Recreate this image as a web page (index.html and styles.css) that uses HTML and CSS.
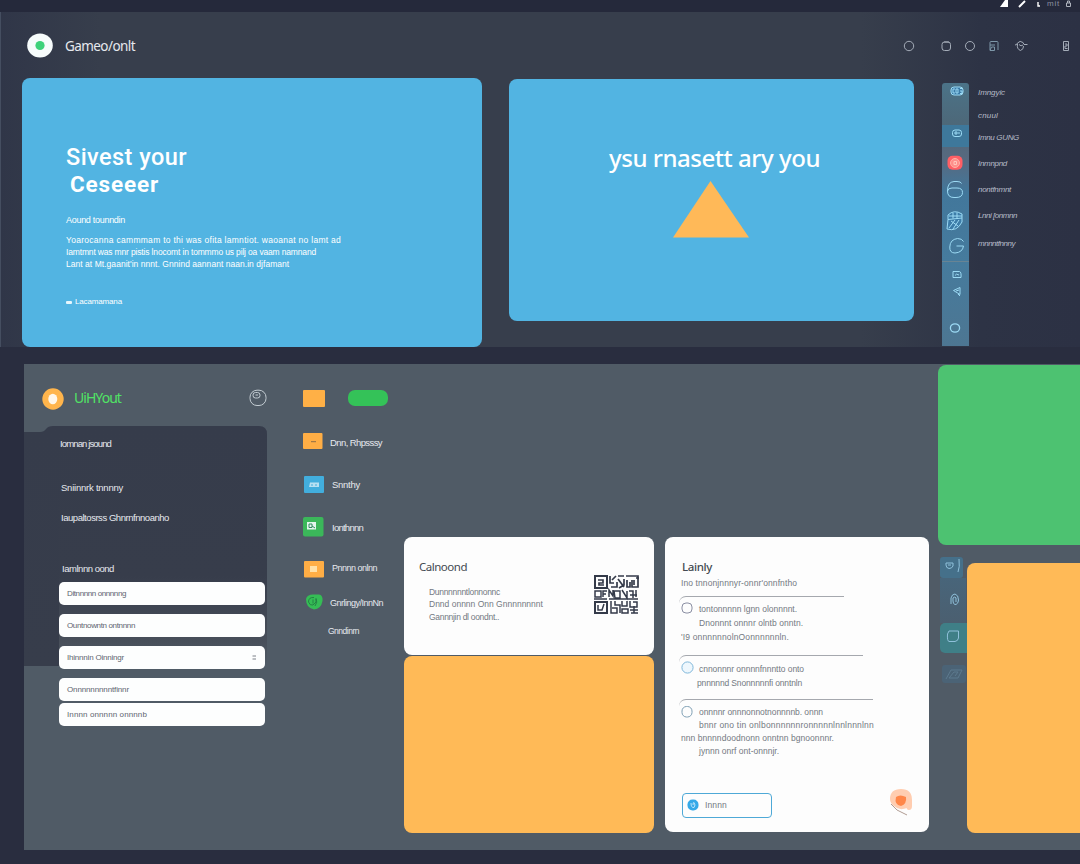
FILE: index.html
```html
<!DOCTYPE html>
<html lang="en">
<head>
<meta charset="utf-8">
<title>Dashboard</title>
<link rel="stylesheet" href="styles.css">
</head>
<body>
<div class="status">
  <svg width="9" height="8" viewBox="0 0 9 8"><path d="M5 0H8V7H0Z" fill="#fff"/></svg>
  <svg class="s-pen" width="9" height="8" viewBox="0 0 9 8"><path d="M1 7 7 1" stroke="#fff" stroke-width="2"/></svg>
  <svg class="s-dot" width="4" height="8" viewBox="0 0 4 8"><path d="M1 2V6H3" fill="none" stroke="#fff" stroke-width="1.4"/></svg>
  <span class="s-text t1">mit</span>
  <svg class="s-lock" width="7" height="8" viewBox="0 0 7 8"><path d="M1.5 3H5.5V6.500H1.500ZM2.500 3V1H4.500V3" fill="none" stroke="#aeb3bd"/></svg>
</div>

<section class="top">
  <header class="head">
    <svg class="logo" width="26" height="25" viewBox="0 0 26 25"><ellipse cx="13" cy="12.500" rx="12.800" ry="12" fill="#f7fcfc"/><circle cx="13" cy="12.500" r="4.600" fill="#3ed27b"/></svg>
    <h1 class="brand t2">Gameo/onlt</h1>
    <nav class="tools">
      <svg width="12" height="12" viewBox="0 0 12 12"><circle cx="6" cy="6" r="4.700"/></svg>
      <svg width="12" height="12" viewBox="0 0 12 12"><rect x="2" y="2" width="8.500" height="8.500" rx="2.500"/><path d="M4 2H9"/></svg>
      <svg width="12" height="12" viewBox="0 0 12 12"><circle cx="6" cy="6" r="4.500"/></svg>
      <svg width="12" height="12" viewBox="0 0 12 12"><path d="M2 10V2.500Q2 1.500 3 1.500H9Q10 1.500 10 2.500V10M2 5H7M3.500 7H6.500V10.500H2Z" stroke="#7d97a8"/></svg>
      <svg width="14" height="12" viewBox="0 0 14 12"><path d="M1 5Q3 5 3.500 3Q6 0 9 2.500L10 4.500H13.500M3.500 4Q2.500 9 6.500 10.500Q10 9 9.500 6M5 4.500Q7 7 9 5"/></svg>
      <svg width="8" height="12" viewBox="0 0 8 12"><path d="M1.500 1.500H6.500V10.500H1.500ZM3 4H5V6H3V8.500H5.500"/></svg>
    </nav>
  </header>
  <div class="heroes">
    <article class="hero hero-a">
      <h2 class="h-line t3">Sivest your</h2>
      <h2 class="h-line h-bold t4">Ceseeer</h2>
      <p class="h-sub t5">Aound tounndin</p>
      <p class="h-p t6">Yoarocanna cammmam to thi was ofita lamntiot. waoanat no lamt ad</p>
      <p class="h-p t7">Iamtmnt was mnr pistis lnocomt in tommmo us pilj oa vaam namnand</p>
      <p class="h-p t8">Lant at Mt.gaanit'in nnnt. Gnnind aannant naan.in djfamant</p>
      <p class="h-foot"><i></i><span class="t9">Lacamamana</span></p>
    </article>
    <article class="hero hero-b">
      <h2 class="h-center t10">ysu rnasett ary you</h2>
      <svg width="76" height="57" viewBox="0 0 76 57"><path d="M37.500 0 76 56.500H0Z" fill="#ffb958"/></svg>
    </article>
    <div class="rail">
      <div class="r1"><svg width="14" height="10" viewBox="0 0 14 10"><rect x="1" y="1" width="12" height="8" rx="3" fill="#3c7ca8"/><path d="M5 3H3V7H5M6 3H8V7H6ZM10 2.500H12M10 5H12V7.500H10" /></svg></div>
      <div class="r2"><svg width="12" height="9" viewBox="0 0 12 9"><rect x="1.500" y="1" width="9" height="6.500" rx="2.500"/><path d="M4 3H6V5H4ZM8 3V5"/></svg></div>
      <div class="r3">
        <svg width="16" height="16" viewBox="0 0 16 16"><rect x=".5" y=".8" width="15" height="14" rx="5" fill="#ff5f65" stroke="none"/><circle cx="8" cy="8" r="4.500" fill="#ff8e8a" stroke="#ffb0a6"/><path d="M7 6.500H9.500V9.500H7Z" stroke="#ffc6bd"/></svg>
        <svg width="18" height="19" viewBox="0 0 18 19"><path d="M15.500 3.500Q15 1.500 11 1.500H8Q1.500 2 1.500 11Q1.500 17.500 8 17.500H10Q16.500 17.500 16.500 12.500Q16.500 8 11 8H6Q2 8 1.500 11"/></svg>
        <svg width="20" height="22" viewBox="0 0 20 22"><path d="M3 5Q9-1 17 4V8L3 9.500ZM3 9.500 2 19Q12 22 17 12V8M8 3V8.500M12 2.500V8M4 6H17" fill="#3c7ca8"/><path d="M6 11 13 16M10 10 4 18M14 10 8 19"/></svg>
        <svg width="18" height="18" viewBox="0 0 18 18"><path d="M15.500 4.500Q14 1.500 9.500 1.500Q2 2.500 1.800 10Q1.500 16 7 16Q14.500 15.500 15.500 9H8.500"/></svg>
      </div>
      <div class="r4">
        <svg width="12" height="9" viewBox="0 0 12 9"><path d="M2 1.500H8.500Q10.500 2 10 7.500H2ZM4 5.500Q5 3 8 5"/></svg>
        <svg width="10" height="11" viewBox="0 0 10 11"><path d="M8 1.500V8.500L1.500 4.500ZM4 5 7 4M6 8 8 10"/></svg>
        <svg class="r-ring" width="12" height="12" viewBox="0 0 12 12"><ellipse cx="6" cy="6" rx="4.600" ry="4.200" stroke-width="1.300"/></svg>
      </div>
    </div>
    <ul class="rail-labels">
      <li><span class="t11">Imngyic</span></li>
      <li><span class="t12">cnuul</span></li>
      <li><span class="t13">Imnu GUNG</span></li>
      <li><span class="t14">Inmnpnd</span></li>
      <li><span class="t15">nontfnmnt</span></li>
      <li><span class="t16">Lnni [onmnn</span></li>
      <li><span class="t17">mnnntfnnny</span></li>
    </ul>
  </div>
</section>

<section class="board">
  <aside class="account">
    <header class="a-head">
      <svg width="22" height="22" viewBox="0 0 22 22"><circle cx="11" cy="11" r="10.700" fill="#ffb54c"/><ellipse cx="10.800" cy="11" rx="4.500" ry="5.200" fill="#fff7ea"/></svg>
      <h2 class="t18">UiHYout</h2>
      <svg class="a-face" width="18" height="18" viewBox="0 0 18 18"><rect x="1" y="1.200" width="16" height="15.300" rx="7"/><rect x="4" y="3.500" width="7" height="5.500" rx="2.500"/><path d="M6.500 6H9"/></svg>
    </header>
    <div class="a-body">
      <p class="a1"><span class="t19">Iomnan jsound</span></p>
      <p class="a2"><span class="t20">Sniinnrk tnnnny</span></p>
      <p class="a3"><span class="t21">Iaupaltosrss Ghnrnfnnoanho</span></p>
      <p class="a4"><span class="t22">Iamlnnn oond</span></p>
      <div class="field"><span class="t23">Ditnnnnn onnnnng</span></div>
      <div class="field"><span class="t24">Ountnowntn ontnnnn</span></div>
      <div class="field"><span class="t25">Ihinnnin Oinningr</span><svg width="5" height="5" viewBox="0 0 5 5"><path d="M.5 1H4M.5 4H4" stroke="#5b626c" stroke-width=".8"/></svg></div>
      <div class="field"><span class="t26">Onnnnnnnnntfinnr</span></div>
      <div class="field"><span class="t27">Innnn onnnnn onnnnb</span></div>
    </div>
  </aside>

  <div class="legend">
    <div class="chips"><i class="chip"></i><i class="pill"></i></div>
    <div class="row k1"><svg width="20" height="17" viewBox="0 0 20 17"><rect width="19.500" height="16" rx="1" fill="#ffae45"/><path d="M8 8.700H13" stroke="#8f6d45"/></svg><span class="t28">Dnn, Rhpsssy</span></div>
    <div class="row k2"><svg width="20" height="17" viewBox="0 0 20 17"><rect width="20" height="17" rx="1" fill="#42aedd"/><path d="M6 6.500H15V11H5Z" fill="#b7e0f2"/><path d="M7 9H9M11 9H13" stroke="#42aedd"/></svg><span class="t29">Snnthy</span></div>
    <div class="row k3"><svg width="21" height="20" viewBox="0 0 21 20"><rect width="20.500" height="19.500" rx="2" fill="#3bb75a"/><rect x="4" y="5" width="9" height="7.500" fill="#e2f5ec"/><path d="M6 7V10.500H9V7ZM9 9 12 11" stroke="#338a62" fill="none"/></svg><span class="t30">Ionthnnn</span></div>
    <div class="row k4"><svg width="20" height="17" viewBox="0 0 20 17"><rect width="20" height="16.500" rx="1" fill="#ffae45"/><rect x="6" y="5" width="7" height="6" fill="#ffe1a8"/></svg><span class="t31">Pnnnn onlnn</span></div>
    <div class="row k5"><svg width="18" height="16" viewBox="0 0 18 16"><path d="M1 5Q2 .5 8 .5H14Q18 1 17.500 7Q16 15 9 15.500Q1 14 1 5Z" fill="#35bd55"/><path d="M9 3.500Q3.500 3 3.500 8Q5 12 8 11L11 8V4.500M8 5.500V9.500M11 4.500Q13 8 10 12" fill="none" stroke="#237d43" stroke-width=".9"/></svg><span class="t32">Gnrlingy/InnNn</span></div>
    <div class="row k6"><span class="t33">Gnndinrn</span></div>
  </div>

  <div class="stack">
    <article class="card code-card">
      <div>
        <h3 class="t34">Calnoond</h3>
        <p class="t35">Dunnnnnntlonnonnc</p>
        <p class="t36">Dnnd onnnn Onn Gnnnnnnnnt</p>
        <p class="t37">Gannnjin dl oondnt..</p>
      </div>
      <svg class="qr" width="45" height="39" viewBox="0 0 45 39" fill="none" stroke="#343a49"><rect x="1" y="1" width="12" height="12" stroke-width="2"/><path d="M4 5H9V8H5V10H10" stroke-width="1.700"/><path d="M16 1V8H20M22 1 18 5M17 12H23V7M24 1H30M24 4 30 12M30 4V10L25 13M32 1H44V12H38V5M33 5V12H36V7M40 5V10M42 3H45" stroke-width="1.700"/><path d="M1 16H7V22H1ZM9 22V16H13M9 19H12M15 22V15L19 21V15M20 16H26V23H21ZM28 15 33 23V16M35 16H39V23M36 20H43M42 15V22M0 24H13M15 24H44" stroke-width="1.500"/><rect x="1" y="27" width="12" height="11" stroke-width="2"/><path d="M4 30V35H8L10 29M17 26V38H23V33H18M21 26V30H26V38M28 26V31H33V26M28 34H34V38H28ZM36 26V32H43V27H39M36 35H44M37 38H44M40 31V38" stroke-width="1.500"/></svg>
    </article>
    <div class="card amber"></div>
  </div>

  <article class="card list-card">
    <h3 class="t38">Lainly</h3>
    <p class="lead t39">Ino tnnonjnnnyr-onnr'onnfntho</p>
    <div class="item i1">
      <svg width="12" height="12" viewBox="0 0 12 12"><rect x="1" y="1" width="10" height="10" rx="4" stroke="#8b8fa3"/></svg>
      <p class="t40">tontonnnnn lgnn olonnnnt.</p>
      <p class="t41">Dnonnnt onnnr olntb onntn.</p>
      <p class="out t42">'I9 onnnnnnolnOonnnnnnln.</p>
    </div>
    <div class="item i2">
      <svg width="13" height="13" viewBox="0 0 13 13"><circle cx="6.500" cy="6.500" r="5.600" stroke="#7fb7da" fill="#eef7fd"/></svg>
      <p class="t43">cnnonnnr onnnnfnnntto onto</p>
      <p class="in t44">pnnnnnd Snonnnnnfi onntnln</p>
    </div>
    <div class="item i3">
      <svg width="12" height="13" viewBox="0 0 12 13"><rect x="1" y="1.500" width="10" height="10.500" rx="4.500" stroke="#7e9fb4"/></svg>
      <p class="t45">onnnnr onnnonnotnonnnnb. onnn</p>
      <p class="t46">bnnr ono tin onlbonnnnnnronnnnnlnnlnnnlnn</p>
      <p class="out t47">nnn bnnnndoodnonn onntnn bgnoonnnr.</p>
      <p class="t48">jynnn onrf ont-onnnjr.</p>
    </div>
    <footer class="actions">
      <button><svg width="12" height="12" viewBox="0 0 12 12"><rect x=".5" y=".5" width="11" height="11" rx="5" fill="#35a9e8"/><path d="M4 4Q4 9 7 8.500Q9 6 7 3.500Q6 3 6 6" fill="none" stroke="#bde5fb"/></svg><span class="t49">Innnn</span></button>
      <svg width="24" height="28" viewBox="0 0 24 28"><path d="M18 20Q10 23 5 18Q1 15 1 11Q1 1 12 1Q23 1 23 12V18Q23 22 20 22Q17 22 18 18Z" fill="#ffcdb0"/><path d="M7 9Q11 6 17 9Q18 16 12 18Q5 17 7 9Z" fill="#ff8648"/><path d="M2 16 8 22 18 27" fill="none" stroke="#9c8377" stroke-width=".8"/></svg>
    </footer>
  </article>

  <div class="side">
    <div class="green"></div>
    <div class="side-row">
      <div class="mini">
        <div class="m1"><svg width="16" height="14" viewBox="0 0 16 14"><path d="M2 4H9V7Q8 9.500 5 9.500Q2 9 2 6ZM4 6H7M15 0Q16 8 14 13"/></svg></div>
        <div class="m2"><svg width="11" height="13" viewBox="0 0 11 13"><path d="M2 11V5Q3 1 6 1Q9.500 2 9.500 7Q9 11.500 6 11.500Q4 11 4 8V5Q6 3 7 5V9"/></svg></div>
        <div class="m3"><svg width="14" height="13" viewBox="0 0 14 13"><path d="M3 1H12.500V8Q12 11 9 11.500H3Q1 11 1.500 4Z"/></svg></div>
        <div class="m4"><svg width="20" height="14" viewBox="0 0 20 14"><path d="M2 12 7 3H18L14 11H5L10 5H14L11 9"/></svg></div>
      </div>
      <div class="amber-tall"></div>
    </div>
  </div>
</section>
</body>
</html>
```
FILE: styles.css
```css
* { box-sizing: border-box; }
body { margin: 0; width: 1080px; height: 864px; overflow: hidden; background: #292d3f; font-family: "Liberation Sans", Arial, sans-serif; font-size: 8.5px; line-height: 12px; color: #e6e9ee; white-space: nowrap; }
h1, h2, h3, p, ul { margin: 0; padding: 0; font-weight: 400; }
svg { display: block; flex: none; }
i { display: block; }

/* status bar */
.status { height: 12px; display: flex; align-items: flex-start; padding-left: 1000px; background: #25293b; }
.s-pen { margin-left: 9px; }
.s-dot { margin-left: 10px; }
.s-text { margin-left: 6px; width: 13px; font-size: 8px; line-height: 8px; color: #8b90a0; }
.s-lock { margin-left: 5px; }

/* top section */
.top { height: 335px; border-left: 1px solid #454e60; background: linear-gradient(90deg, #303648 0, #373e4c 100px, #373e4c 860px, #2d3345 980px, #2c3144 100%); }
.head { height: 66px; display: flex; align-items: center; padding: 1px 0 0 26px; }
.brand { margin: 0 -6px 0 12px; width: 844px; flex: none; font: 13.5px/18px "Noto Sans", sans-serif; }
.tools { display: flex; align-items: center; stroke: #a4acb8; fill: none; stroke-width: 1; }
.tools svg:nth-child(1) { margin-right: 25px; }
.tools svg:nth-child(2) { margin-right: 12px; }
.tools svg:nth-child(3) { margin-right: 12px; }
.tools svg:nth-child(4) { margin-right: 14px; }
.tools svg:nth-child(5) { margin-right: 34px; }
.heroes { display: flex; align-items: flex-start; padding-left: 21px; }
.hero { flex: none; background: #52b4e2; color: #fff; border-radius: 8px; }
.hero-a { width: 459.5px; height: 268.5px; padding: 66px 0 0 44px; }
.hero-b { width: 405px; height: 242px; margin: .5px 0 0 27px; padding-top: 64px; display: flex; flex-direction: column; align-items: center; }
.h-line { font: 500 23.5px/27px Roboto, sans-serif; }
.h-bold { padding-left: 4px; font-weight: 700; font-size: 22.5px; }
.h-sub { margin-top: 16px; font-size: 9px; }
.h-sub + .h-p { margin-top: 8px; }
.h-foot { display: flex; align-items: center; gap: 3px; margin-top: 26px; font-size: 8px; }
.h-foot i { width: 6px; height: 3px; border-radius: 1px; background: #e6f6fd; }
.h-center { margin-left: 7px; font: 500 24px/30px "Noto Sans", sans-serif; }
.hero-b svg { margin: 8px 1px 0 0; }

.rail { width: 27px; height: 263px; margin: 5px 0 0 28.5px; border-radius: 3px 3px 0 0; overflow: hidden; background: linear-gradient(#4b7388, #4d6879 40px, #57697f 75px, #42779b 110px, #467b9d 180px, #4d7692); stroke: #9cdaf4; fill: none; }
.rail svg { margin: 0 auto; }
.r1 { height: 42px; padding: 3px 0 0 3px; }
.r2 { height: 22px; padding: 4px 0 0 2px; background: #3e789b; }
.r3 { height: 115px; padding-top: 8px; border-bottom: 1px solid #688494; display: flex; flex-direction: column; }
.r3 svg:nth-child(1) { margin-left: 5px; }
.r3 svg:nth-child(2) { margin: 9px 0 0 4px; }
.r3 svg:nth-child(3) { margin: 11px 0 0 3px; }
.r3 svg:nth-child(4) { margin: 5px 0 0 6px; }
.r4 { padding-top: 8px; padding-left: 2px; }
.r4 svg:nth-child(2) { margin-top: 7px; }
.r4 .r-ring { margin: 25px 0 0 5px; }
.rail-labels { list-style: none; padding: 9px 0 0 9px; font-size: 8px; font-style: italic; color: #b7bcc8; }
.rail-labels li { height: 12px; margin-bottom: 14px; }
.rail-labels li:nth-child(1) { margin-bottom: 11px; }
.rail-labels li:nth-child(2) { margin-bottom: 10px; }
.rail-labels li:nth-child(6) { margin-bottom: 16px; }

/* lower board */
.board { display: flex; align-items: flex-start; height: 486px; margin: 17px 0 0 24px; background: #505b66; }
.account { width: 243px; }
.a-head { display: flex; align-items: center; height: 62px; padding: 7px 0 0 18px; }
.a-head h2 { width: 176px; margin: -2px 0 0 10px; font: 14px/20px "Noto Sans", sans-serif; color: #50e365; }
.a-face { margin-top: -2px; stroke: #c3ccd2; fill: none; }
.a-body { height: 301px; padding-left: 35px; clip-path: path("M0 6H16Q20 6 22 3Q24 0 29 0H235Q243 0 243 8V301H0Z"); background: linear-gradient(#363c4b, #373d4b) 0 0 / 35px 240px no-repeat, linear-gradient(#363c4b 0, #373d4b 150px, #484f5a 215px, #505b66 240px) 35px 0 / 208px 240px no-repeat; font-size: 9.5px; }
.a1 { padding: 12px 0 0 1px; }
.a2 { padding: 32px 0 0 2px; }
.a3 { padding: 18px 0 0 2px; }
.a4 { padding: 39px 0 0 3px; }
.field { display: flex; align-items: center; justify-content: space-between; width: 206px; height: 23px; margin-top: 9px; padding: 0 8px; border-radius: 5px; background: #fdfefe; color: #5d6570; font-size: 8px; }
.a4 + .field { margin-top: 7px; }
.field:last-child { margin-top: 2px; }

.legend { width: 101px; margin-left: 36px; padding-top: 26px; font-size: 9.5px; }
.chips { display: flex; gap: 23px; height: 17px; }
.chip { width: 22px; height: 17px; background: #ffb046; border-radius: 1px; }
.pill { width: 40px; height: 16px; background: #34c258; border-radius: 7px; }
.row { display: flex; align-items: center; gap: 8px; height: 20px; }
.row span { padding-top: 1px; }
.k1 { margin-top: 24px; gap: 7px; }
.k1 span { padding-top: 3px; }
.k2 { margin-top: 23px; padding-left: 1px; }
.k3 { margin-top: 23px; }
.k4 { margin-top: 22px; padding-left: 1px; font-size: 9px; }
.k4 span { padding: 0 0 2px; }
.k5 { margin-top: 13px; padding-left: 2px; gap: 7px; font-size: 9px; }
.k6 { margin-top: 8px; padding-left: 25px; font-size: 8.5px; }

.stack { width: 250px; padding-top: 173px; }
.card { border-radius: 8px; background: #fdfdfd; color: #737982; }
.code-card { display: flex; height: 118px; padding: 23px 0 0 15px; }
.code-card > div { width: 175px; flex: none; }
.code-card h3 { margin-bottom: 12px; font: 11.5px/14px "Noto Sans", sans-serif; color: #444a51; }
.code-card p { height: 13px; padding-left: 10px; }
.code-card p:nth-of-type(n+2) { position: relative; top: -1px; }
.qr { margin: 15px 0 0; }
.amber { height: 177px; margin-top: 1px; background: #ffba57; }

.list-card { width: 264px; height: 295px; margin: 173px 0 0 11px; padding: 23px 16px 0; }
.list-card h3 { padding-left: 1px; font: 500 11.5px/14px "Noto Sans", sans-serif; color: #444a51; }
.lead { margin-top: 3px; }
.item { position: relative; margin-left: -2px; padding: 6px 0 0 20px; border-top: 1px solid #a5a8ae; border-top-left-radius: 7px; }
.item svg { position: absolute; left: 2px; top: 5px; fill: none; }
.item p { height: 14px; }
.item .in { margin-left: -2px; }
.item .out { margin-left: -18px; height: 13px; }
.i1 { width: 165px; height: 59px; margin-top: 7px; }
.i2 { width: 184px; height: 44px; padding-top: 7px; }
.i3 { width: 194px; height: 94px; }
.i3 p { height: 13px; }
.actions { display: flex; align-items: flex-start; justify-content: space-between; margin-top: -5px; }
.actions button { display: flex; align-items: center; gap: 6px; width: 90px; height: 25px; margin: 5px 0 0 1px; padding: 0 0 2px 4px; border: 1px solid #4ea9d7; border-radius: 4px; background: none; font: inherit; color: #737982; }

.side { width: 142px; margin-left: 9px; }
.green { height: 180px; margin-top: 1px; border-radius: 8px 0 0 8px; background: #4dc271; }
.side-row { display: flex; align-items: flex-start; }
.mini { width: 28.5px; padding: 12px 0 0 2px; fill: none; stroke: #8fc0da; }
.m1, .m2, .m3, .m4 { display: flex; align-items: center; justify-content: center; }
.m1 { height: 21px; width: 23px; padding-bottom: 3px; border-radius: 3px; background: #45708a; }
.m2 { height: 45px; width: 26px; padding: 0 0 3px 2px; background: linear-gradient(#48657a, #4b5f70); }
.m3 { height: 30px; width: 26.500px; padding-bottom: 3px; border-radius: 5px 0 0 5px; background: #3f7f87; }
.m4 { height: 18px; width: 24px; margin: 12px 0 0 2px; border-radius: 3px; background: #4b6376; stroke: #5d7a8e; }
.amber-tall { flex: 1; height: 270px; margin-top: 18px; border-radius: 8px 0 0 8px; background: #ffba57; }

/* tracking per label */
.t1 { letter-spacing: .78px; }
.t2 { letter-spacing: -.57px; }
.t3 { letter-spacing: .44px; }
.t4 { letter-spacing: .84px; }
.t5 { letter-spacing: -.29px; }
.t6 { letter-spacing: .28px; }
.t7 { letter-spacing: -.16px; }
.t8 { letter-spacing: .04px; }
.t9 { letter-spacing: -.15px; }
.t10 { letter-spacing: -.46px; }
.t11 { letter-spacing: -.08px; }
.t12 { letter-spacing: .17px; }
.t13 { letter-spacing: -.34px; }
.t14 { letter-spacing: -.31px; }
.t15 { letter-spacing: -.29px; }
.t16 { letter-spacing: -.46px; }
.t17 { letter-spacing: -.48px; }
.t18 { letter-spacing: -.95px; }
.t19 { letter-spacing: -.87px; }
.t20 { letter-spacing: -.23px; }
.t21 { letter-spacing: -.46px; }
.t22 { letter-spacing: -.47px; }
.t23 { letter-spacing: -.4px; }
.t24 { letter-spacing: -.35px; }
.t25 { letter-spacing: -.2px; }
.t26 { letter-spacing: -.13px; }
.t27 { letter-spacing: .11px; }
.t28 { letter-spacing: -.6px; }
.t29 { letter-spacing: -.26px; }
.t30 { letter-spacing: -.75px; }
.t31, .t32, .t33 { letter-spacing: -.5px; }
.t34 { letter-spacing: -.49px; }
.t35 { letter-spacing: -.3px; }
.t36 { letter-spacing: 0; }
.t37 { letter-spacing: -.3px; }
.t38 { letter-spacing: -.37px; }
.t39 { letter-spacing: .1px; }
.t40 { letter-spacing: -.01px; }
.t41 { letter-spacing: .04px; }
.t42 { letter-spacing: .15px; }
.t43 { letter-spacing: -.05px; }
.t44 { letter-spacing: -.14px; }
.t45 { letter-spacing: -.06px; }
.t46 { letter-spacing: .21px; }
.t47 { letter-spacing: .05px; }
.t48 { letter-spacing: .01px; }
.t49 { letter-spacing: .14px; }
```
